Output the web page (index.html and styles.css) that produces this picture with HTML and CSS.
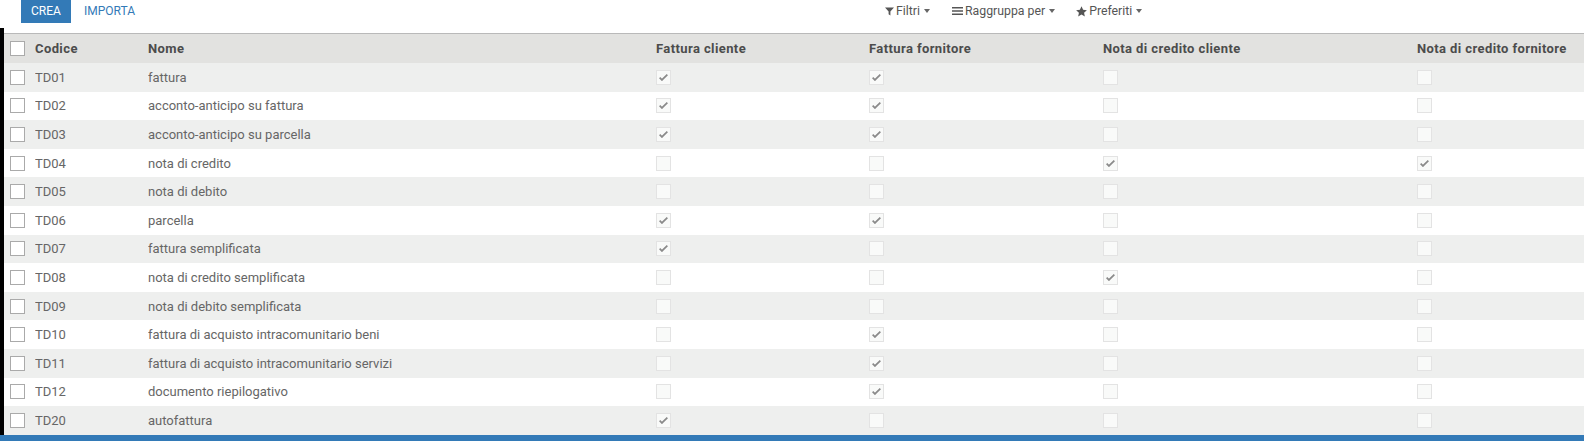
FILE: index.html
```html
<!DOCTYPE html>
<html>
<head>
<meta charset="utf-8">
<link rel="stylesheet" href="styles.css">
</head>
<body>
<div class="cp">
  <div class="cp-left">
    <button class="btn-primary">CREA</button>
    <button class="btn-link">IMPORTA</button>
  </div>
  <div class="cp-search">
    <span class="opt"><svg class="ico" viewBox="0 0 10 10" width="9" height="9"><path d="M0 0.5h10L6 5v4.5L4 8V5z" fill="#555"/></svg>Filtri<span class="caret"></span></span>
    <span class="opt opt-group"><svg class="ico" viewBox="0 0 11 10" width="11" height="10"><path d="M0 1h11v1.4H0zM0 4.3h11v1.4H0zM0 7.6h11v1.4H0z" fill="#555"/></svg>Raggruppa per<span class="caret"></span></span>
    <span class="opt opt-fav"><svg class="ico" viewBox="0 0 12 12" width="11" height="11"><path d="M6 0.3l1.75 3.8 4.1.45-3.05 2.8.85 4.05L6 9.35 2.35 11.4l.85-4.05L.15 4.55l4.1-.45z" fill="#555"/></svg>Preferiti<span class="caret"></span></span>
  </div>
</div>
<div class="content">
  <div class="table" id="table">
    <div class="row head">
      <div class="cell sel"><span class="cb"></span></div>
      <div class="cell">Codice</div>
      <div class="cell">Nome</div>
      <div class="cell">Fattura cliente</div>
      <div class="cell">Fattura fornitore</div>
      <div class="cell">Nota di credito cliente</div>
      <div class="cell">Nota di credito fornitore</div>
    </div>
  </div>
</div>
<div class="bluebar"></div>
<script src="app.js"></script>
</body>
</html>
```
FILE: app.js
```js
const rows = [
  ["TD01","fattura",1,1,0,0],
  ["TD02","acconto-anticipo su fattura",1,1,0,0],
  ["TD03","acconto-anticipo su parcella",1,1,0,0],
  ["TD04","nota di credito",0,0,1,1],
  ["TD05","nota di debito",0,0,0,0],
  ["TD06","parcella",1,1,0,0],
  ["TD07","fattura semplificata",1,0,0,0],
  ["TD08","nota di credito semplificata",0,0,1,0],
  ["TD09","nota di debito semplificata",0,0,0,0],
  ["TD10","fattura di acquisto intracomunitario beni",0,1,0,0],
  ["TD11","fattura di acquisto intracomunitario servizi",0,1,0,0],
  ["TD12","documento riepilogativo",0,1,0,0],
  ["TD20","autofattura",1,0,0,0]
];
const check = '<svg viewBox="0 0 10 8" width="9" height="7"><path d="M0.6 4.2l2.6 2.6L9.4 0.8" stroke="#8a8a8a" stroke-width="2" fill="none"/></svg>';
const t = document.getElementById('table');
rows.forEach((r, i) => {
  const d = document.createElement('div');
  d.className = 'row' + (i % 2 === 0 ? ' odd' : '');
  let h = '<div class="cell sel"><span class="cb"></span></div>';
  h += '<div class="cell">' + r[0] + '</div><div class="cell">' + r[1] + '</div>';
  for (let k = 2; k < 6; k++) {
    h += '<div class="cell"><span class="bool">' + (r[k] ? check : '') + '</span></div>';
  }
  d.innerHTML = h;
  t.appendChild(d);
});
```
FILE: styles.css
```css
* { box-sizing: border-box; }
html, body { margin: 0; padding: 0; }
body {
  font-family: Roboto, "Noto Sans", sans-serif;
  font-size: 13px;
  color: #666;
  background: #fff;
  width: 1584px;
  height: 441px;
  overflow: hidden;
  display: flex;
  flex-direction: column;
}
.cp {
  height: 28px;
  flex: none;
  display: flex;
  align-items: flex-start;
}
.cp-left {
  display: flex;
  align-items: flex-start;
  padding-left: 21px;
  width: 868px;
}
.btn-primary {
  font-family: Roboto, sans-serif;
  font-size: 12px;
  background: #337ab7;
  color: #fff;
  border: 0;
  height: 23px;
  width: 50px;
  padding: 0;
  margin: 0;
  line-height: 21px;
}
.btn-link {
  font-family: Roboto, sans-serif;
  font-size: 12px;
  background: none;
  border: 0;
  color: #337ab7;
  padding: 0 0 0 13px;
  margin: 0;
  height: 23px;
  line-height: 21px;
}
.cp-search {
  display: flex;
  padding-left: 17px;
  padding-top: 4px;
  color: #555;
  font-size: 12.3px;
  line-height: 14px;
}
.opt {
  display: flex;
  align-items: center;
}
.opt-group { margin-left: 22px; }
.opt-fav { margin-left: 21px; }
.ico { margin-right: 2px; }
.caret {
  display: inline-block;
  width: 0; height: 0;
  border-left: 3.5px solid transparent;
  border-right: 3.5px solid transparent;
  border-top: 4px solid #666;
  margin-left: 4px;
}
.content {
  flex: 1;
  border-left: 4px solid #000;
  padding-top: 5px;
}
.table {
  border-top: 1px solid #b9b9b9;
}
.row {
  display: grid;
  grid-template-columns: 31px 113px 508px 213px 234px 314px 167px;
  height: 28.6px;
  align-items: center;
}
.row.head {
  height: 29px;
  background: #e2e2e0;
  color: #4c4c4c;
  font-weight: bold;
  letter-spacing: 0.4px;
}
.row.odd { background: #eeefee; }
.cell { white-space: nowrap; overflow: hidden; display: flex; align-items: center; }
.cell.sel { padding-left: 6px; }
.cb {
  width: 15px; height: 15px;
  border: 1px solid #aaa;
  background: #fff;
  display: inline-block;
}
.bool {
  width: 15px; height: 15px;
  border: 1px solid #e3e3e3;
  background: #f9faf9;
  display: inline-flex;
  align-items: center;
  justify-content: center;
}
.bluebar {
  height: 6px;
  flex: none;
  background: #337ab7;
}
```
